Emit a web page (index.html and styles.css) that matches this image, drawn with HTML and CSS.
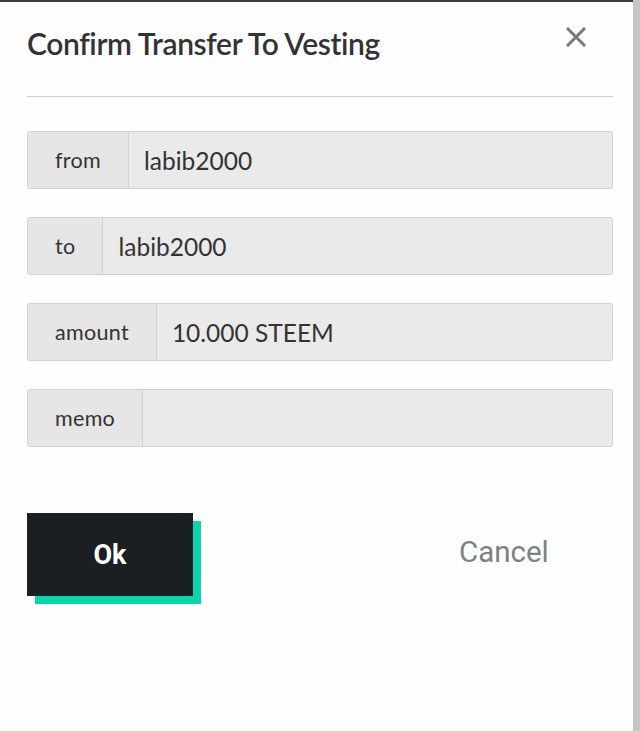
FILE: index.html
```html
<!DOCTYPE html>
<html>
<head>
<meta charset="utf-8">
<link rel="stylesheet" href="styles.css">
</head>
<body>
<div class="modal">
  <div class="header">
    <h1 class="title">Confirm Transfer To Vesting</h1>
    <button class="close" aria-label="close">
      <svg width="20" height="20" viewBox="0 0 20 20"><path d="M2 2L18 18M18 2L2 18" stroke="#777" stroke-width="3" stroke-linecap="square"/></svg>
    </button>
  </div>
  <hr class="divider">
  <div class="fields">
    <div class="field"><span class="label">from</span><span class="value">labib2000</span></div>
    <div class="field"><span class="label">to</span><span class="value">labib2000</span></div>
    <div class="field"><span class="label">amount</span><span class="value">10.000 STEEM</span></div>
    <div class="field"><span class="label">memo</span><span class="value"></span></div>
  </div>
  <div class="actions">
    <button class="ok">Ok</button>
    <button class="cancel">Cancel</button>
  </div>
</div>
</body>
</html>
```
FILE: styles.css
```css
html, body {
  margin: 0;
  padding: 0;
  height: 100%;
}
body {
  background: #c6c6c6;
  font-family: "Lato", "Open Sans", sans-serif;
}
.modal {
  width: 633px;
  height: 731px;
  background: #fefefe;
  border-top: 2px solid #3a3a3a;
  padding: 0 20px 0 27px;
  box-sizing: border-box;
}
.header {
  display: flex;
  justify-content: space-between;
  align-items: flex-start;
  height: 94px;
}
.title {
  margin: 23px 0 0 0;
  font-size: 30px;
  font-weight: 600;
  color: #333;
  letter-spacing: -0.4px;
}
.close {
  margin: 25px 27px 0 0;
  padding: 0;
  border: 0;
  background: none;
  width: 20px;
  height: 20px;
}
.divider {
  margin: 0;
  border: 0;
  border-top: 1px solid #cfcfcf;
  width: 586px;
}
.fields {
  display: flex;
  flex-direction: column;
  gap: 28px;
  margin-top: 34px;
  width: 586px;
}
.field {
  display: flex;
  height: 58px;
  border: 1px solid #d2d2d2;
  border-radius: 3px;
  box-sizing: border-box;
  background: #eaeaea;
  overflow: hidden;
}
.label {
  display: flex;
  align-items: center;
  padding: 0 27px 0 27px;
  background: #e6e6e6;
  border-right: 1px solid #d2d2d2;
  color: #333;
  font-size: 21.5px;
  letter-spacing: 0.3px;
}
.value {
  display: flex;
  align-items: center;
  padding: 0 15px;
  font-size: 24.5px;
  color: #333;
}
.actions {
  display: flex;
  align-items: flex-start;
  margin-top: 66px;
  width: 586px;
}
.ok {
  width: 166px;
  height: 83px;
  background: #1a1f24;
  color: #fff;
  border: 0;
  border-radius: 0;
  box-shadow: 8px 8px 0 #07d6aa;
  font-family: "Roboto", sans-serif;
  font-weight: 700;
  font-size: 27px;
  padding: 0;
}
.cancel {
  margin-left: 266px;
  height: 83px;
  background: none;
  border: 0;
  padding: 0 0 5px 0;
  color: #7b8187;
  font-family: "Roboto", sans-serif;
  font-size: 29.5px;
}
```
